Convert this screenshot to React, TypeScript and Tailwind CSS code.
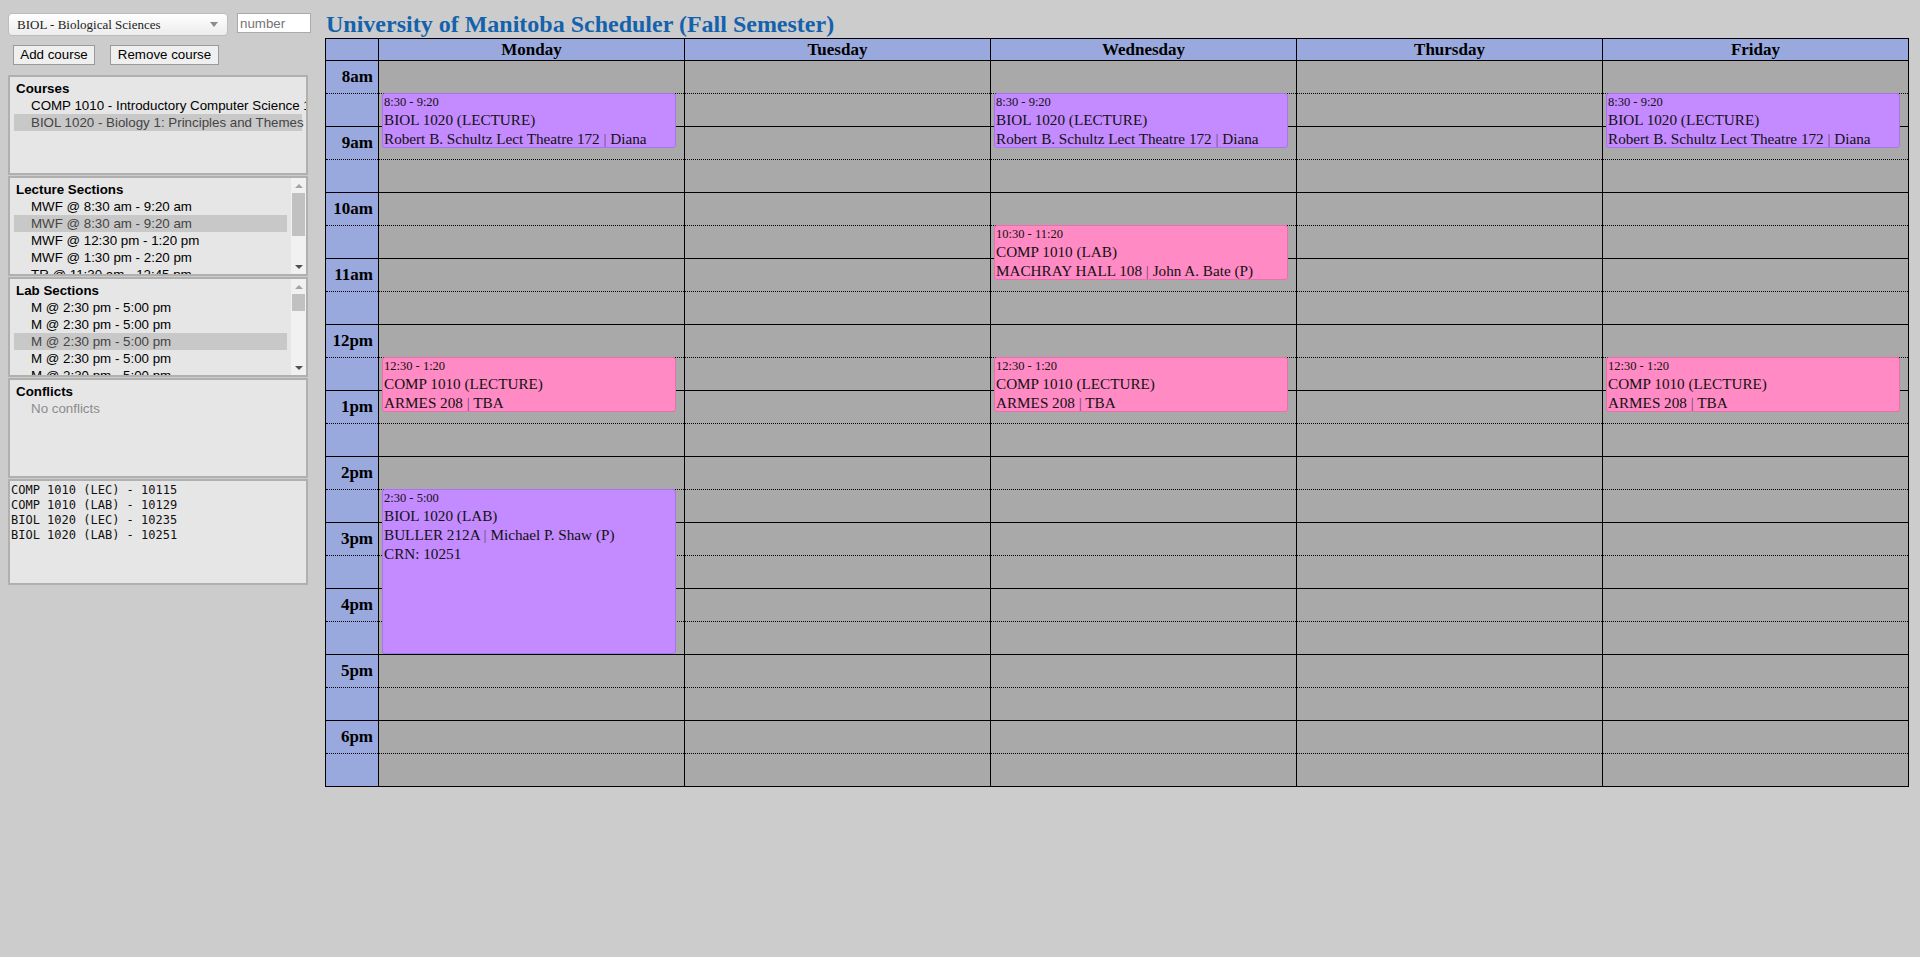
import React from 'react';

type CalEvent = {
  day: number;
  start: number;
  end: number;
  time: string;
  title: string;
  room: string;
  who: string;
  crn?: string;
  kind: 'biol' | 'comp';
};

const DAYS = ['Monday', 'Tuesday', 'Wednesday', 'Thursday', 'Friday'];
const HOURS = ['8am', '9am', '10am', '11am', '12pm', '1pm', '2pm', '3pm', '4pm', '5pm', '6pm'];
const HOUR_PX = 66;

const EVENTS: CalEvent[] = [
  { day: 0, start: 8.5, end: 9 + 20 / 60, time: '8:30 - 9:20', title: 'BIOL 1020 (LECTURE)', room: 'Robert B. Schultz Lect Theatre 172', who: 'Diana', kind: 'biol' },
  { day: 2, start: 8.5, end: 9 + 20 / 60, time: '8:30 - 9:20', title: 'BIOL 1020 (LECTURE)', room: 'Robert B. Schultz Lect Theatre 172', who: 'Diana', kind: 'biol' },
  { day: 4, start: 8.5, end: 9 + 20 / 60, time: '8:30 - 9:20', title: 'BIOL 1020 (LECTURE)', room: 'Robert B. Schultz Lect Theatre 172', who: 'Diana', kind: 'biol' },
  { day: 2, start: 10.5, end: 11 + 20 / 60, time: '10:30 - 11:20', title: 'COMP 1010 (LAB)', room: 'MACHRAY HALL 108', who: 'John A. Bate (P)', kind: 'comp' },
  { day: 0, start: 12.5, end: 13 + 20 / 60, time: '12:30 - 1:20', title: 'COMP 1010 (LECTURE)', room: 'ARMES 208', who: 'TBA', kind: 'comp' },
  { day: 2, start: 12.5, end: 13 + 20 / 60, time: '12:30 - 1:20', title: 'COMP 1010 (LECTURE)', room: 'ARMES 208', who: 'TBA', kind: 'comp' },
  { day: 4, start: 12.5, end: 13 + 20 / 60, time: '12:30 - 1:20', title: 'COMP 1010 (LECTURE)', room: 'ARMES 208', who: 'TBA', kind: 'comp' },
  { day: 0, start: 14.5, end: 17, time: '2:30 - 5:00', title: 'BIOL 1020 (LAB)', room: 'BULLER 212A', who: 'Michael P. Shaw (P)', crn: '10251', kind: 'biol' },
];

const sans = 'font-["Liberation_Sans",Arial,sans-serif]';

function Scrollbar({ thumbHeight }: { thumbHeight: number }) {
  return (
    <div className="flex h-full w-[15px] shrink-0 flex-col items-center bg-[#f1f1f1]">
      <div className="flex h-[15px] w-full items-center justify-center">
        <div className="h-0 w-0 border-x-[4px] border-b-[4px] border-x-transparent border-b-[#a3a3a3]" />
      </div>
      <div className="w-[13px] bg-[#c1c1c1]" style={{ height: thumbHeight }} />
      <div className="flex-1" />
      <div className="flex h-[15px] w-full items-center justify-center">
        <div className="h-0 w-0 border-x-[4px] border-t-[4px] border-x-transparent border-t-[#505050]" />
      </div>
    </div>
  );
}

function ListPanel({ title, items, selected, thumb }: { title: string; items: string[]; selected: number; thumb?: number }) {
  return (
    <div className="flex h-[100px] overflow-hidden border-2 border-[#b0b0b0] bg-[#e6e6e6]">
      <div className="min-w-0 flex-1 overflow-hidden pt-[3px]">
        <div className="pl-[6px] text-[13.33px] font-bold leading-[17px] text-black">{title}</div>
        {items.map((it, i) => (
          <div
            key={i}
            className={`ml-[4px] mr-[4px] whitespace-nowrap pl-[17px] text-[13.33px] leading-[17px] ${i === selected ? 'bg-[#c8c8c8] text-[#444]' : 'text-black'}`}
          >
            {it}
          </div>
        ))}
      </div>
      {thumb !== undefined && <Scrollbar thumbHeight={thumb} />}
    </div>
  );
}

function EventBox({ ev }: { ev: CalEvent }) {
  const top = (ev.start - 8) * HOUR_PX - 1;
  const height = (ev.end - ev.start) * HOUR_PX;
  const color = ev.kind === 'biol' ? 'bg-[#c48aff] border-[#a874ec]' : 'bg-[#ff8ac4] border-[#ea6fab]';
  return (
    <div
      className={`absolute left-[3px] z-10 w-[294px] overflow-hidden rounded-[3px] border pl-[1px] text-[#111] ${color}`}
      style={{ top, height }}
    >
      <div className="text-[12.5px] leading-[16px]">{ev.time}</div>
      <div className="whitespace-nowrap text-[15.2px] leading-[19px]">{ev.title}</div>
      <div className="whitespace-nowrap text-[15.2px] leading-[19px]">
        {ev.room} <span className="text-[#6a4a7a]">|</span> {ev.who}
      </div>
      {ev.crn && <div className="text-[15.2px] leading-[19px]">CRN: {ev.crn}</div>}
    </div>
  );
}

function HalfCells({ label, blue }: { label?: string; blue?: boolean }) {
  const bg = blue ? 'bg-[#99a9de]' : 'bg-[#a9a9a9]';
  return (
    <>
      <div className={`flex h-[33px] items-center justify-end border-b border-dotted border-black pr-[5px] ${bg}`}>
        {label && <span className="text-[17px] font-bold">{label}</span>}
      </div>
      <div className={`h-[33px] border-b border-black ${bg}`} />
    </>
  );
}

export default function App() {
  return (
    <div className="flex min-h-screen bg-[#cccccc] font-['Liberation_Serif','Times_New_Roman',serif] text-black">
      {/* sidebar */}
      <aside className={`w-[325px] shrink-0 pl-[8px] pr-[15px] pt-[13px] ${sans}`}>
        <div className="flex items-start gap-[9px]">
          <div className="flex h-[23px] w-[220px] shrink-0 items-center justify-between rounded-[4px] border border-[#bdbdbd] bg-gradient-to-b from-white to-[#ececec] pl-[8px] pr-[9px]">
            <span className="font-['Liberation_Serif','Times_New_Roman',serif] text-[13px] text-[#222]">BIOL - Biological Sciences</span>
            <div className="h-0 w-0 border-x-[4px] border-t-[5px] border-x-transparent border-t-[#8a8a8a]" />
          </div>
          <input
            placeholder="number"
            className="h-[20px] w-[74px] shrink-0 border border-[#aaaaaa] bg-white px-[2px] text-[13.33px] text-black outline-none placeholder:text-[#757575]"
          />
        </div>
        <div className="ml-[5px] mt-[9px] flex gap-[15px]">
          <button className="h-[20px] w-[82px] border border-[#9a9a9a] bg-[#efefef] text-[13.33px] leading-[18px] text-black">Add course</button>
          <button className="h-[20px] w-[109px] border border-[#9a9a9a] bg-[#efefef] text-[13.33px] leading-[18px] text-black">Remove course</button>
        </div>

        <div className="mt-[10px] flex w-[300px] flex-col gap-[1px]">
          <ListPanel
            title="Courses"
            items={['COMP 1010 - Introductory Computer Science 1', 'BIOL 1020 - Biology 1: Principles and Themes']}
            selected={1}
          />
          <ListPanel
            title="Lecture Sections"
            items={['MWF @ 8:30 am - 9:20 am', 'MWF @ 8:30 am - 9:20 am', 'MWF @ 12:30 pm - 1:20 pm', 'MWF @ 1:30 pm - 2:20 pm', 'TR @ 11:30 am - 12:45 pm']}
            selected={1}
            thumb={43}
          />
          <ListPanel
            title="Lab Sections"
            items={['M @ 2:30 pm - 5:00 pm', 'M @ 2:30 pm - 5:00 pm', 'M @ 2:30 pm - 5:00 pm', 'M @ 2:30 pm - 5:00 pm', 'M @ 2:30 pm - 5:00 pm']}
            selected={2}
            thumb={17}
          />
          <div className="h-[100px] border-2 border-[#b0b0b0] bg-[#e6e6e6] pt-[3px]">
            <div className="pl-[6px] text-[13.33px] font-bold leading-[17px]">Conflicts</div>
            <div className="pl-[21px] text-[13.33px] leading-[17px] text-[#8c8c8c]">No conflicts</div>
          </div>
          <div className="h-[106px] border-2 border-[#b0b0b0] bg-[#e6e6e6] pl-[1px] pt-[2px] font-['DejaVu_Sans_Mono',monospace] text-[12px] leading-[15px] text-[#111]">
            <div>COMP 1010 (LEC) - 10115</div>
            <div>COMP 1010 (LAB) - 10129</div>
            <div>BIOL 1020 (LEC) - 10235</div>
            <div>BIOL 1020 (LAB) - 10251</div>
          </div>
        </div>
      </aside>

      {/* calendar */}
      <main className="pb-[40px]">
        <h1 className="mt-[10px] pl-[1px] text-[24px] font-bold leading-[28px] text-[#1462ad]">
          University of Manitoba Scheduler (Fall Semester)
        </h1>
        <div className="flex w-[1584px] border-l border-t border-black">
          <div className="w-[53px] shrink-0 border-r border-black">
            <div className="h-[22px] border-b border-black bg-[#99a9de]" />
            {HOURS.map((h) => (
              <HalfCells key={h} label={h} blue />
            ))}
          </div>
          {DAYS.map((d, di) => (
            <div key={d} className="w-[306px] shrink-0 border-r border-black">
              <div className="flex h-[22px] items-center justify-center border-b border-black bg-[#99a9de] text-[17px] font-bold">
                {d}
              </div>
              <div className="relative">
                {HOURS.map((h) => (
                  <HalfCells key={h} />
                ))}
                {EVENTS.filter((e) => e.day === di).map((e, i) => (
                  <EventBox key={i} ev={e} />
                ))}
              </div>
            </div>
          ))}
        </div>
      </main>
    </div>
  );
}
